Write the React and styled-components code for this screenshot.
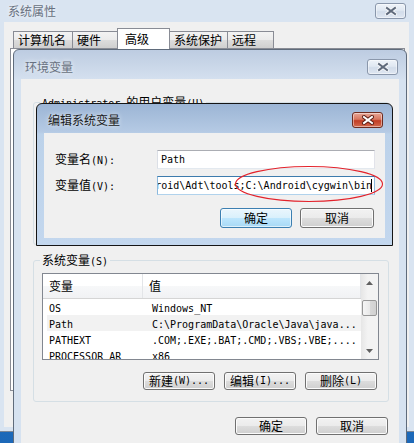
import React from "react";
import styled, { createGlobalStyle } from "styled-components";

const GlobalStyle = createGlobalStyle`
  html, body {
    margin: 0;
    padding: 0;
  }
  body {
    width: 414px;
    height: 443px;
    overflow: hidden;
    background: #2b7fcf;
  }
`;

// SimSun-like mix: CJK at 12px, latin at half width (6px per char)
const HAN_RUNS = /[\u2e80-\u9fff\uf900-\ufaff\uff00-\uffef]+|[^\u2e80-\u9fff\uf900-\ufaff\uff00-\uffef]+/g;
const IS_HAN = /[\u2e80-\u9fff\uf900-\ufaff\uff00-\uffef]/;

const Han = styled.span`
  font-family: "Noto Sans CJK SC", "Noto Sans", sans-serif;
  font-size: 12px;
`;

const Lat = styled.span`
  font-family: "DejaVu Sans Mono", "Liberation Mono", monospace;
  font-size: 10px;
  white-space: pre;
`;

const Txt = ({ children }) => (
  <>
    {String(children)
      .match(HAN_RUNS)
      .map((run, i) =>
        IS_HAN.test(run) ? <Han key={i}>{run}</Han> : <Lat key={i}>{run}</Lat>
      )}
  </>
);

const Desktop = styled.div`
  position: relative;
  width: 414px;
  height: 443px;
  overflow: hidden;
  background: linear-gradient(#2f8ad8, #1c68b8);
  color: #000;
  line-height: 14px;
`;

/* ---------- outer window: 系统属性 ---------- */

const OuterWindow = styled.div`
  display: flex;
  flex-direction: column;
  width: 414px;
  height: 432px;
  box-sizing: border-box;
  background: #d9e4f1;
  border-bottom: 1px solid #7c8796;
`;

const TitleBar = styled.div`
  display: flex;
  align-items: flex-start;
  justify-content: space-between;
  flex-shrink: 0;
  box-sizing: border-box;
  height: ${(p) => p.$h}px;
  padding: ${(p) => p.$pt}px ${(p) => p.$pr}px 0 ${(p) => p.$pl}px;
`;

const Caption = styled.div`
  font-family: "Noto Sans CJK SC", sans-serif;
  font-size: 12px;
  line-height: 16px;
  color: ${(p) => (p.$active ? "#1a1a1a" : "#687180")};
  text-shadow: 0 0 5px rgba(255, 255, 255, 0.9);
`;

const CloseBox = styled.div`
  display: flex;
  align-items: center;
  justify-content: center;
  width: 31px;
  height: 16px;
  box-sizing: border-box;
  border-radius: 3px;
  border: 1px solid ${(p) => (p.$active ? "#6e2c20" : "#8a97ab")};
  background: ${(p) =>
    p.$active
      ? "linear-gradient(#e8a797, #d7765f 45%, #c23d24 55%, #d36a4e)"
      : "linear-gradient(#eef3f9, #e0e8f2 45%, #d2dcea 55%, #dfe7f2)"};
  box-shadow: inset 0 0 0 1px rgba(255, 255, 255, 0.45);
`;

const CloseButton = ({ active }) => (
  <CloseBox $active={active}>
    <svg width="12" height="10" viewBox="0 0 12 10">
      <path
        d="M2 2 L10 8 M10 2 L2 8"
        stroke={active ? "#5a1b12" : "#f5f7fa"}
        strokeWidth="4"
        strokeLinecap="square"
      />
      <path
        d="M2 2 L10 8 M10 2 L2 8"
        stroke={active ? "#ffffff" : "#5f6a7b"}
        strokeWidth="2"
        strokeLinecap="square"
      />
    </svg>
  </CloseBox>
);

const OuterBody = styled.div`
  flex: 1;
  display: flex;
  flex-direction: column;
  margin: 0 5px 4px 4px;
  padding: 6px 4px 0 6px;
  background: #f0f0f0;
`;

const TabStrip = styled.div`
  display: flex;
  align-items: flex-end;
  height: 20px;
  margin-left: 3px;
  position: relative;
  z-index: 1;
`;

const Tab = styled.div`
  box-sizing: border-box;
  width: ${(p) => p.$w}px;
  height: ${(p) => (p.$selected ? 21 : 17)}px;
  margin: 0 0 ${(p) => (p.$selected ? -1 : 0)}px ${(p) => (p.$first ? 0 : p.$selected ? -2 : -1)}px;
  padding: ${(p) => (p.$selected ? "3px 0 0 7px" : "1px 0 0 4px")};
  border: 1px solid #898c95;
  border-bottom: none;
  background: ${(p) =>
    p.$selected ? "#ffffff" : "linear-gradient(#f3f3f3, #ebebeb 50%, #dddddd 50%, #cfcfcf)"};
  position: relative;
  z-index: ${(p) => (p.$selected ? 2 : 1)};
`;

const TabPanel = styled.div`
  height: 343px;
  box-sizing: border-box;
  border: 1px solid #898c95;
  background: #ffffff;
`;

/* ---------- 环境变量 window ---------- */

const Window = styled.div`
  position: absolute;
  left: ${(p) => p.$x}px;
  top: ${(p) => p.$y}px;
  width: ${(p) => p.$w}px;
  height: ${(p) => p.$h}px;
  box-sizing: border-box;
  display: flex;
  flex-direction: column;
  border: 1px solid ${(p) => (p.$active ? "#151515" : "#5f6b7b")};
  border-radius: 6px 6px 0 0;
  background: ${(p) =>
    p.$active
      ? "linear-gradient(#9cb5d5, #b5cae4 28px, #bcd2ea 30px, #c3d7ee)"
      : "linear-gradient(#bdcce1, #d3dfee 28px, #d6e2f0 30px, #d6e2f0)"};
  z-index: ${(p) => (p.$active ? 5 : 2)};
`;

const WinBody = styled.div`
  flex: 1;
  display: flex;
  flex-direction: column;
  margin: 0 7px ${(p) => p.$mb || 0}px;
  padding: ${(p) => p.$pad};
  background: #f0f0f0;
`;

const GroupBox = styled.div`
  position: relative;
  flex-shrink: 0;
  box-sizing: border-box;
  margin-top: ${(p) => p.$mt}px;
  height: ${(p) => p.$h}px;
  padding: 12px 9px 0 8px;
  border: 1px solid #d5dfe5;
  border-radius: 3px;
  display: flex;
  flex-direction: column;
`;

const Legend = styled.div`
  position: absolute;
  top: -8px;
  left: 6px;
  padding: 0 2px;
  background: #f0f0f0;
  white-space: nowrap;
`;

const ListView = styled.div`
  display: flex;
  width: 337px;
  height: 87px;
  box-sizing: border-box;
  border: 1px solid #828790;
  background: #ffffff;
  overflow: hidden;
`;

const ListMain = styled.div`
  flex: 1;
  min-width: 0;
  display: flex;
  flex-direction: column;
`;

const HeaderRow = styled.div`
  display: grid;
  grid-template-columns: 100px 1fr;
  flex-shrink: 0;
  height: 25px;
  box-sizing: border-box;
  border-bottom: 1px solid #d5d5d5;
  background: linear-gradient(#ffffff, #ffffff 50%, #f7f8f9 50%, #f1f2f4);
`;

const HeaderCell = styled.div`
  display: flex;
  align-items: center;
  padding-left: 6px;
  border-right: 1px solid #e3e5e8;
`;

const Row = styled.div`
  display: grid;
  grid-template-columns: 100px 1fr;
  flex-shrink: 0;
  height: 16px;
  line-height: 16px;
  margin-left: 4px;
  background: ${(p) => (p.$selected ? "#f2f2f2" : "transparent")};
`;

const Cell = styled.div`
  padding-left: ${(p) => p.$pl}px;
  white-space: nowrap;
  overflow: hidden;
`;

const ScrollBar = styled.div`
  width: 17px;
  flex-shrink: 0;
  display: flex;
  flex-direction: column;
  background: linear-gradient(90deg, #e6e6e6, #f3f3f3 40%, #f3f3f3);
`;

const ScrollArrow = styled.div`
  height: 17px;
  flex-shrink: 0;
  display: flex;
  align-items: center;
  justify-content: center;
`;

const Track = styled.div`
  flex: 1;
  padding-top: 9px;
`;

const Thumb = styled.div`
  height: 16px;
  margin: 0 1px;
  box-sizing: border-box;
  border: 1px solid #979797;
  border-radius: 2px;
  background: linear-gradient(90deg, #f5f5f5, #e9e9e9 50%, #d9d9d9 50%, #d1d1d1);
`;

const Arrow = ({ down }) => (
  <svg width="7" height="4" viewBox="0 0 7 4">
    <path d={down ? "M0 0 H7 L3.5 4 Z" : "M0 4 H7 L3.5 0 Z"} fill="#606060" />
  </svg>
);

const ButtonRow = styled.div`
  display: flex;
  justify-content: flex-end;
  gap: ${(p) => p.$gap}px;
  margin-top: ${(p) => p.$mt}px;
  padding-right: ${(p) => p.$pr || 0}px;
`;

const Button = styled.div`
  display: flex;
  align-items: center;
  justify-content: center;
  width: ${(p) => p.$w || 72}px;
  height: ${(p) => p.$h || 18}px;
  box-sizing: border-box;
  border: 1px solid ${(p) => (p.$default ? "#3c7fb1" : "#707070")};
  border-radius: 3px;
  background: ${(p) =>
    p.$default
      ? "linear-gradient(#eaf6fd, #d9f0fc 50%, #bee6fd 50%, #a7d9f5)"
      : "linear-gradient(#f2f2f2, #ebebeb 50%, #dddddd 50%, #cfcfcf)"};
  box-shadow: inset 0 0 0 1px ${(p) => (p.$default ? "rgba(255,255,255,0.6)" : "#fbfbfb")};
  white-space: nowrap;
`;

/* ---------- 编辑系统变量 dialog ---------- */

const FieldRow = styled.div`
  display: flex;
  align-items: center;
  height: 19px;
  margin-top: ${(p) => p.$mt || 0}px;
`;

const FieldLabel = styled.div`
  width: 102px;
  white-space: nowrap;
`;

const TextBox = styled.div`
  display: flex;
  align-items: center;
  justify-content: ${(p) => (p.$end ? "flex-end" : "flex-start")};
  width: 218px;
  height: 19px;
  box-sizing: border-box;
  padding: 0 ${(p) => (p.$end ? 2 : 3)}px 0 3px;
  border: 1px solid;
  border-color: ${(p) =>
    p.$focused ? "#3d7bad #8cb9dd #b0d2ec #8cb9dd" : "#abadb3 #e2e3ea #e3e9ef #dbdfe6"};
  background: #ffffff;
  white-space: nowrap;
  overflow: hidden;
`;

const Caret = styled.span`
  display: inline-block;
  flex-shrink: 0;
  width: 1px;
  height: 13px;
  margin-left: -1px;
  background: #000000;
`;

const Annotation = styled.svg`
  position: absolute;
  left: 234px;
  top: 165px;
  z-index: 10;
  overflow: visible;
`;

const tabs = [
  { label: "计算机名", w: 60 },
  { label: "硬件", w: 47 },
  { label: "高级", w: 53, selected: true },
  { label: "系统保护", w: 59 },
  { label: "远程", w: 47 },
];

const rows = [
  { name: "OS", value: "Windows_NT" },
  { name: "Path", value: "C:\\ProgramData\\Oracle\\Java\\java...", selected: true },
  { name: "PATHEXT", value: ".COM;.EXE;.BAT;.CMD;.VBS;.VBE;...." },
  { name: "PROCESSOR_AR", value: "x86" },
];

export default function App() {
  return (
    <>
      <GlobalStyle />
      <Desktop>
        <OuterWindow>
          <TitleBar $h={22} $pt={3} $pl={8} $pr={8}>
            <Caption>系统属性</Caption>
            <CloseButton />
          </TitleBar>
          <OuterBody>
            <TabStrip>
              {tabs.map((t, i) => (
                <Tab key={t.label} $w={t.w} $first={i === 0} $selected={t.selected}>
                  <Txt>{t.label}</Txt>
                </Tab>
              ))}
            </TabStrip>
            <TabPanel />
          </OuterBody>
        </OuterWindow>

        <Window $x={13} $y={49} $w={394} $h={420}>
          <TitleBar $h={29} $pt={9} $pl={11} $pr={8}>
            <Caption>环境变量</Caption>
            <CloseButton />
          </TitleBar>
          <WinBody $pad="0 10px 0 12px">
            <GroupBox $mt={23} $h={143}>
              <Legend>
                <Txt>Administrator 的用户变量(U)</Txt>
              </Legend>
            </GroupBox>

            <GroupBox $mt={15} $h={142}>
              <Legend>
                <Txt>系统变量(S)</Txt>
              </Legend>
              <ListView>
                <ListMain>
                  <HeaderRow>
                    <HeaderCell>
                      <Txt>变量</Txt>
                    </HeaderCell>
                    <HeaderCell>
                      <Txt>值</Txt>
                    </HeaderCell>
                  </HeaderRow>
                  {rows.map((r) => (
                    <Row key={r.name} $selected={r.selected}>
                      <Cell $pl={2}>
                        <Txt>{r.name}</Txt>
                      </Cell>
                      <Cell $pl={5}>
                        <Txt>{r.value}</Txt>
                      </Cell>
                    </Row>
                  ))}
                </ListMain>
                <ScrollBar>
                  <ScrollArrow>
                    <Arrow />
                  </ScrollArrow>
                  <Track>
                    <Thumb />
                  </Track>
                  <ScrollArrow>
                    <Arrow down />
                  </ScrollArrow>
                </ScrollBar>
              </ListView>
              <ButtonRow $gap={9} $mt={12} $pr={2}>
                <Button>
                  <Txt>新建(W)...</Txt>
                </Button>
                <Button>
                  <Txt>编辑(I)...</Txt>
                </Button>
                <Button>
                  <Txt>删除(L)</Txt>
                </Button>
              </ButtonRow>
            </GroupBox>

            <ButtonRow $gap={9} $mt={15} $pr={1}>
              <Button>
                <Txt>确定</Txt>
              </Button>
              <Button>
                <Txt>取消</Txt>
              </Button>
            </ButtonRow>
          </WinBody>

          <Window $active $x={22} $y={53} $w={357} $h={143}>
            <TitleBar $h={29} $pt={8} $pl={11} $pr={9}>
              <Caption $active>编辑系统变量</Caption>
              <CloseButton active />
            </TitleBar>
            <WinBody $mb={7} $pad="17px 10px 0 11px">
              <FieldRow>
                <FieldLabel>
                  <Txt>变量名(N):</Txt>
                </FieldLabel>
                <TextBox>
                  <Txt>Path</Txt>
                </TextBox>
              </FieldRow>
              <FieldRow $mt={7}>
                <FieldLabel>
                  <Txt>变量值(V):</Txt>
                </FieldLabel>
                <TextBox $focused $end>
                  <Txt>{"%SystemRoot%;C:\\Android\\Adt\\tools;C:\\Android\\cygwin\\bin"}</Txt>
                  <Caret />
                </TextBox>
              </FieldRow>
              <ButtonRow $gap={8} $mt={13} $pr={1}>
                <Button $default $h={20}>
                  <Txt>确定</Txt>
                </Button>
                <Button $w={74} $h={20}>
                  <Txt>取消</Txt>
                </Button>
              </ButtonRow>
            </WinBody>
          </Window>
        </Window>

        <Annotation width="150" height="38" viewBox="0 0 150 38">
          <ellipse cx="75" cy="19" rx="73.5" ry="17.5" fill="none" stroke="#e3222b" strokeWidth="1.1" />
        </Annotation>
      </Desktop>
    </>
  );
}
